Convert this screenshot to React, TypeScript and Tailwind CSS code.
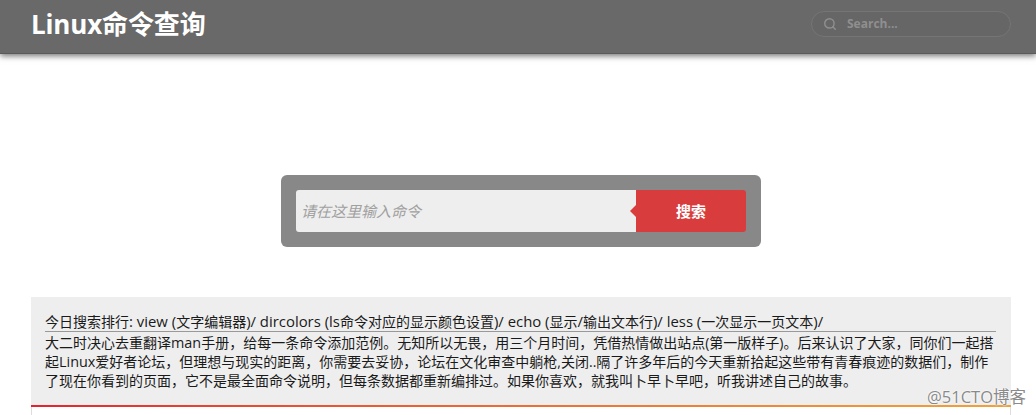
import type { ReactNode } from 'react'
import { Search } from 'lucide-react'

const fontStack = 'font-["Open_Sans","Noto_Sans_CJK_SC",sans-serif]'

// latin words run a bit bigger than the chinese text around them
function L({ children }: { children: ReactNode }) {
  return <span className="text-[14.9px]">{children}</span>
}

function S({ children }: { children: ReactNode }) {
  return <span className="text-[14.4px]">{children}</span>
}

export default function App() {
  return (
    <div className={`relative h-[415px] overflow-hidden bg-white ${fontStack}`}>
      {/* Header */}
      <header className="flex h-[54px] items-center justify-between border-b border-[#5a5a5a] bg-[#696969] pb-[6px] pl-[31px] pr-[25px] shadow-[0_2px_6px_rgba(0,0,0,0.55)]">
        <h1 className="text-[26px] leading-none font-bold tracking-[-0.15px] text-white">Linux命令查询</h1>
        <div className="flex h-[26px] w-[200px] items-center gap-[10px] rounded-full border border-[#757575] bg-[#666666] pl-[11px]">
          <Search className="h-[14px] w-[14px] text-[#8f8f8f]" strokeWidth={2.5} />
          <span className="text-[12px] font-bold text-[#8f8f8f]">Search...</span>
        </div>
      </header>

      <div className="ml-[31px] w-[980px]">
        {/* Search box */}
        <div className="mx-auto mt-[121px] w-[480px] rounded-md bg-[#888888] p-[15px]">
          <div className="flex h-[42px]">
            <input
              placeholder="请在这里输入命令"
              className="h-full w-[340px] rounded-l-[3px] bg-[#eeeeee] pl-[5px] text-[15px] italic outline-none placeholder:text-[#a0a0a0]"
            />
            <button className="relative h-full w-[110px] rounded-r-[3px] bg-[#d93c3c] text-[15px] font-bold text-white">
              <span className="absolute top-1/2 left-[-6px] h-0 w-0 -translate-y-1/2 border-y-[6px] border-r-[6px] border-y-transparent border-r-[#d93c3c]" />
              搜索
            </button>
          </div>
        </div>

        {/* Info */}
        <section className="mt-[50px] bg-[#eeeeee] pt-[15px] pr-[15px] pb-[15px] pl-[14px] text-[14px] leading-[19px] text-[#1a1a1a]">
          <div className="whitespace-nowrap border-b border-[#999999]">
            今日搜索排行<L>: view (</L>文字编辑器<L>)/ dircolors (ls</L>命令对应的显示颜色设置<L>)/ echo (</L>显示<L>/</L>输出文本行<L>)/ less (</L>一次显示一页文本<L>)/</L>
          </div>
          <p className="mt-[1px] whitespace-nowrap">
            大二时决心去重翻译<S>man</S>手册，给每一条命令添加范例。无知所以无畏，用三个月时间，凭借热情做出站点(第一版样子)。后来认识了大家，同你们一起搭
            <br />
            起<S>Linux</S>爱好者论坛，但理想与现实的距离，你需要去妥协，论坛在文化审查中躺枪,关闭..隔了许多年后的今天重新拾起这些带有青春痕迹的数据们，制作
            <br />
            了现在你看到的页面，它不是最全面命令说明，但每条数据都重新编排过。如果你喜欢，就我叫卜早卜早吧，听我讲述自己的故事。
          </p>
        </section>
        <div className="h-[2px] bg-gradient-to-r from-[#e5202e] to-[#f0a23a]" />
        <div className="h-[20px] border-x border-[#dddddd]" />
      </div>

      {/* Watermark */}
      <div className="absolute right-[10px] bottom-[10px] text-[16.5px] leading-none text-[#8a8a8a] [text-shadow:0_0_2px_#fff,0_0_2px_#fff]">
        @51CTO博客
      </div>
    </div>
  )
}
